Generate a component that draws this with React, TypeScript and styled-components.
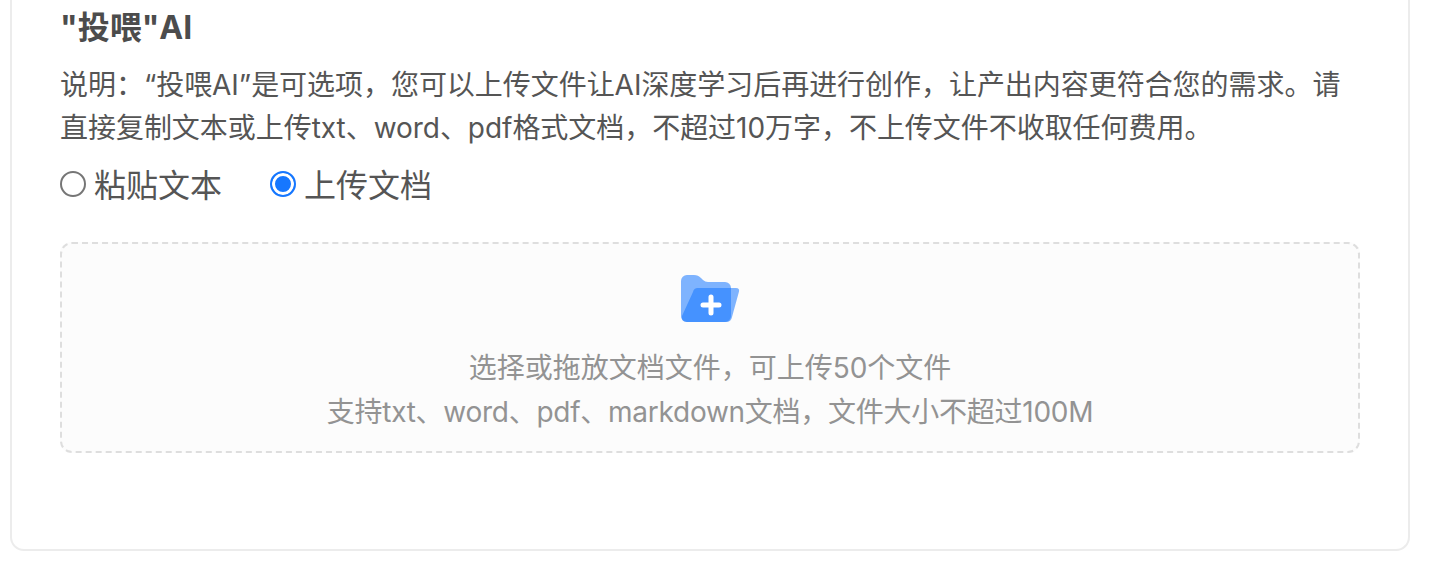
import React from 'react';
import styled, { createGlobalStyle } from 'styled-components';

const GlobalStyle = createGlobalStyle`
  html, body {
    margin: 0;
    padding: 0;
    background: #fff;
    overflow: hidden;
  }
  body {
    font-family: Inter, "Noto Sans CJK SC", sans-serif;
  }
`;

const Page = styled.div`
  width: 1446px;
  height: 566px;
  padding: 0 36px 15px 10px;
  box-sizing: border-box;
`;

const Card = styled.section`
  height: 100%;
  box-sizing: border-box;
  padding: 8px 48px 0 48px;
  border: 2px solid #ececec;
  border-top: none;
  border-radius: 0 0 14px 14px;
  background: #fff;
`;

const Title = styled.h2`
  margin: 0;
  font-size: 32px;
  line-height: 40px;
  font-weight: 700;
  color: #4c4c4c;
`;

const Description = styled.p`
  margin: 16px 0 0;
  font-size: 28px;
  line-height: 43px;
  letter-spacing: -0.04px;
  color: #555;
`;

const RadioRow = styled.div`
  display: flex;
  gap: 48px;
  margin-top: 13px;
`;

const RadioLabel = styled.label`
  display: flex;
  align-items: center;
  gap: 8px;
  font-size: 32px;
  line-height: 46px;
  color: #555;
`;

const RadioMark = styled.span<{ $checked?: boolean }>`
  width: 26px;
  height: 26px;
  box-sizing: border-box;
  border-radius: 50%;
  border: 2px solid ${(p) => (p.$checked ? '#1677ff' : '#767676')};
  background: ${(p) => (p.$checked ? '#1677ff' : '#fff')};
  box-shadow: ${(p) => (p.$checked ? 'inset 0 0 0 3px #fff' : 'none')};
  margin-top: -5px;
`;

const Dropzone = styled.div`
  margin-top: 33px;
  height: 211px;
  box-sizing: border-box;
  border: 2px dashed #dedede;
  border-radius: 12px;
  background: #fcfcfc;
  display: flex;
  flex-direction: column;
  align-items: center;
  padding-top: 30px;
`;

const Hint = styled.div<{ $first?: boolean }>`
  font-size: 28px;
  line-height: 44px;
  color: #939393;
  margin-top: ${(p) => (p.$first ? '22px' : '0')};
  letter-spacing: ${(p) => (p.$first ? '0' : '-0.26px')};
`;

const FolderIcon = () => (
  <svg width="60" height="50" viewBox="0 0 60 50" aria-hidden="true">
    <path
      d="M1 7a6 6 0 0 1 6-6h7c3 0 5 1 7 3l2 2c1.500 1.300 3 2 5 2h17a6 6 0 0 1 6 6v28a6 6 0 0 1-6 6H7a6 6 0 0 1-6-6z"
      fill="#1677ff"
      fillOpacity="0.55"
    />
    <path
      d="M13 18a5 5 0 0 1 5-4H56c2.500 0 3.500 1.500 3 3.500L52 43a6 6 0 0 1-6 5H7c-4 0-6-3-5-6z"
      fill="#1677ff"
      fillOpacity="0.55"
    />
    <path d="M31 23v16M23 31h16" stroke="#fff" strokeWidth="5" strokeLinecap="round" />
  </svg>
);

const App = () => {
  return (
    <>
      <GlobalStyle />
      <Page>
        <Card>
          <Title>"投喂"AI</Title>
          <Description>
            说明：“投喂AI”是可选项，您可以上传文件让AI深度学习后再进行创作，让产出内容更符合您的需求。请直接复制文本或上传txt、word、pdf格式文档，不超过10万字，不上传文件不收取任何费用。
          </Description>
          <RadioRow>
            <RadioLabel>
              <RadioMark />
              粘贴文本
            </RadioLabel>
            <RadioLabel>
              <RadioMark $checked />
              上传文档
            </RadioLabel>
          </RadioRow>
          <Dropzone>
            <FolderIcon />
            <Hint $first>选择或拖放文档文件，可上传50个文件</Hint>
            <Hint>支持txt、word、pdf、markdown文档，文件大小不超过100M</Hint>
          </Dropzone>
        </Card>
      </Page>
    </>
  );
};

export default App;
